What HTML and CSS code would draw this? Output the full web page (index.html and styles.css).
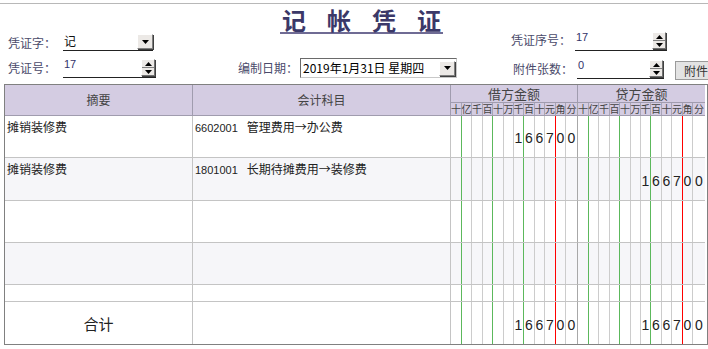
FILE: index.html
```html
<!DOCTYPE html>
<html lang="zh-CN">
<head>
    <meta charset="UTF-8">
    <meta name="viewport" content="width=device-width, initial-scale=1.0">
    <title>记帐凭证</title>
    <link rel="stylesheet" href="styles.css">
</head>
<body>
    <div class="wrap">
        <!-- 凭证头 -->
        <div class="top">
            <div class="titleRow">
                <h1 class="title"><span>记</span><span>帐</span><span>凭</span><span>证</span></h1>
            </div>

            <div class="formRow rowA">
                <label class="lbl">凭证字：</label>
                <div class="field selectField">
                    <span class="val">记</span>
                    <span class="dropBtn"><svg width="7" height="4"><path d="M0 0h7L3.5 4z"/></svg></span>
                </div>

                <div class="grp grpSeq">
                    <label class="lbl lblWide">凭证序号：</label>
                    <div class="field spinField seqField">
                        <span class="val num">17</span>
                        <span class="spinBtn">
                            <i><svg width="7" height="4"><path d="M3.5 0L7 4H0z"/></svg></i>
                            <i><svg width="7" height="4"><path d="M0 0h7L3.5 4z"/></svg></i>
                        </span>
                    </div>
                </div>
            </div>

            <div class="formRow rowB">
                <label class="lbl">凭证号：</label>
                <div class="field spinField noField">
                    <span class="val num">17</span>
                    <span class="spinBtn">
                        <i><svg width="7" height="4"><path d="M3.5 0L7 4H0z"/></svg></i>
                        <i><svg width="7" height="4"><path d="M0 0h7L3.5 4z"/></svg></i>
                    </span>
                </div>

                <div class="grp grpDate">
                    <label class="lbl lblDate">编制日期：</label>
                    <div class="dateBox">
                        <span class="dateVal">2019年1月31日 星期四</span>
                        <span class="dropBtn"><svg width="7" height="4"><path d="M0 0h7L3.5 4z"/></svg></span>
                    </div>
                </div>

                <div class="grp grpAttach">
                    <label class="lbl lblWide">附件张数：</label>
                    <div class="field spinField attachField">
                        <span class="val num">0</span>
                        <span class="spinBtn">
                            <i><svg width="7" height="4"><path d="M3.5 0L7 4H0z"/></svg></i>
                            <i><svg width="7" height="4"><path d="M0 0h7L3.5 4z"/></svg></i>
                        </span>
                    </div>
                    <button class="attachBtn">附件</button>
                </div>
            </div>
        </div>

        <!-- 分录表 -->
        <div class="voucher">
            <div class="cell hd span2">摘要</div>
            <div class="cell hd span2">会计科目</div>
            <div class="cell hd amt">借方金额</div>
            <div class="cell hd amt lastCol">贷方金额</div>
            <div class="cell hd money unit"><span>十</span><span>亿</span><span>千</span><span>百</span><span>十</span><span>万</span><span>千</span><span>百</span><span>十</span><span>元</span><span>角</span><span>分</span></div>
            <div class="cell hd money unit lastCol"><span>十</span><span>亿</span><span>千</span><span>百</span><span>十</span><span>万</span><span>千</span><span>百</span><span>十</span><span>元</span><span>角</span><span>分</span></div>

            <!-- 第1行 -->
            <div class="cell txt">摊销装修费</div>
            <div class="cell txt"><span class="code">6602001</span>管理费用→办公费</div>
            <div class="cell money"><span></span><span></span><span></span><span></span><span></span><span></span><span>1</span><span>6</span><span>6</span><span>7</span><span>0</span><span>0</span></div>
            <div class="cell money lastCol"><span></span><span></span><span></span><span></span><span></span><span></span><span></span><span></span><span></span><span></span><span></span><span></span></div>

            <!-- 第2行 -->
            <div class="cell txt shade">摊销装修费</div>
            <div class="cell txt shade"><span class="code">1801001</span>长期待摊费用→装修费</div>
            <div class="cell money shade"><span></span><span></span><span></span><span></span><span></span><span></span><span></span><span></span><span></span><span></span><span></span><span></span></div>
            <div class="cell money shade lastCol"><span></span><span></span><span></span><span></span><span></span><span></span><span>1</span><span>6</span><span>6</span><span>7</span><span>0</span><span>0</span></div>

            <!-- 第3行 -->
            <div class="cell txt"></div>
            <div class="cell txt"></div>
            <div class="cell money"><span></span><span></span><span></span><span></span><span></span><span></span><span></span><span></span><span></span><span></span><span></span><span></span></div>
            <div class="cell money lastCol"><span></span><span></span><span></span><span></span><span></span><span></span><span></span><span></span><span></span><span></span><span></span><span></span></div>

            <!-- 第4行 -->
            <div class="cell txt shade"></div>
            <div class="cell txt shade"></div>
            <div class="cell money shade"><span></span><span></span><span></span><span></span><span></span><span></span><span></span><span></span><span></span><span></span><span></span><span></span></div>
            <div class="cell money shade lastCol"><span></span><span></span><span></span><span></span><span></span><span></span><span></span><span></span><span></span><span></span><span></span><span></span></div>

            <!-- 第5行 -->
            <div class="cell txt"></div>
            <div class="cell txt"></div>
            <div class="cell money"><span></span><span></span><span></span><span></span><span></span><span></span><span></span><span></span><span></span><span></span><span></span><span></span></div>
            <div class="cell money lastCol"><span></span><span></span><span></span><span></span><span></span><span></span><span></span><span></span><span></span><span></span><span></span><span></span></div>

            <!-- 合计 -->
            <div class="cell total lastRow">合计</div>
            <div class="cell txt lastRow"></div>
            <div class="cell money lastRow"><span></span><span></span><span></span><span></span><span></span><span></span><span>1</span><span>6</span><span>6</span><span>7</span><span>0</span><span>0</span></div>
            <div class="cell money lastRow lastCol"><span></span><span></span><span></span><span></span><span></span><span></span><span>1</span><span>6</span><span>6</span><span>7</span><span>0</span><span>0</span></div>
        </div>
    </div>
</body>
</html>
```

FILE: styles.css
```css
body {
    margin: 0;
    background: #fff;
    font-family: "Noto Sans CJK SC", "Liberation Sans", sans-serif;
    font-size: 12px;
    color: #333;
}

.wrap {
    width: 708px;
    height: 349px;
    overflow: hidden;
    padding-top: 3px;
    box-sizing: border-box;
}

.top {
    border-top: 1px solid #b8b8b8;
}

/* 标题 */
.titleRow {
    height: 30px;
    padding: 4px 0 0 15px;
    box-sizing: border-box;
    text-align: center;
}

.title {
    display: inline-flex;
    gap: 21px;
    margin: 0;
    padding: 0 2px;
    font-size: 24px;
    line-height: 24px;
    font-weight: bold;
    color: #3b3868;
    border-bottom: 2px solid #6f6b94;
}

/* 表单行 */
.formRow {
    display: flex;
    padding-left: 8px;
}

.formRow > *,
.grp > * {
    flex-shrink: 0;
}

.rowA {
    height: 18px;
}

.rowB {
    height: 20px;
    margin-top: 6px;
}

.grp {
    display: flex;
}

.lbl {
    width: 55px;
    color: #4a4a6a;
    line-height: 18px;
}

.rowB .lbl {
    line-height: 20px;
}

.lblWide {
    width: 64px;
}

.lblDate {
    width: 62px;
}

.field {
    display: flex;
    justify-content: space-between;
    box-sizing: border-box;
    border-bottom: 1px solid #222;
}

.val {
    padding-left: 1px;
    line-height: 14px;
    color: #111;
}

.num {
    font-family: "Liberation Sans", sans-serif;
    font-size: 11px;
    line-height: 12px;
    color: #33336a;
}

.selectField {
    width: 90px;
    height: 17px;
}

.dropBtn {
    display: flex;
    align-items: center;
    justify-content: center;
    width: 16px;
    height: 15px;
    box-sizing: border-box;
    background: #ece9e6;
    border: 1px solid;
    border-color: #fff #808080 #808080 #fff;
    box-shadow: 1px 1px 0 #404040;
}

.spinField {
    height: 20px;
}

.noField {
    width: 93px;
}

.grpSeq {
    margin-left: 358px;
    margin-top: -3px;
}

.seqField {
    width: 92px;
}

.spinBtn {
    display: flex;
    flex-direction: column;
    width: 14px;
    height: 17px;
    margin: 1px 1px 0 0;
    box-sizing: border-box;
    background: #ece9e6;
    border: 1px solid;
    border-color: #fff #707070 #707070 #fff;
    box-shadow: 1px 1px 0 #404040;
}

.spinBtn i {
    flex: 1;
    display: flex;
    align-items: center;
    justify-content: center;
}

.spinBtn i + i {
    border-top: 1px solid #808080;
}

.grpDate {
    margin-left: 82px;
}

.dateBox {
    display: flex;
    justify-content: space-between;
    align-items: center;
    width: 157px;
    height: 20px;
    box-sizing: border-box;
    border: 1px solid #9a9a9a;
    border-color: #6a6a6a #c8c8c8 #c8c8c8 #6a6a6a;
    padding: 0 1px 0 2px;
}

.dateVal {
    color: #000;
    line-height: 18px;
}

.grpAttach {
    margin-left: 56px;
    margin-top: 1px;
}

.attachField {
    width: 87px;
}

.attachBtn {
    width: 40px;
    height: 19px;
    margin: 2px 0 0 11px;
    padding: 0 0 0 8px;
    text-align: left;
    font-family: "Noto Sans CJK SC", sans-serif;
    font-size: 12px;
    line-height: 16px;
    color: #333;
    background: #e3e3e3;
    border: 1px solid #9a9a9a;
}

/* 分录表 */
.voucher {
    display: grid;
    grid-template-columns: 188px 258px 127px 127px;
    grid-template-rows: 18px 13px 42px 43px 42px 42px 17px 42px;
    width: 702px;
    margin: 6px 0 0 4px;
    border: 1px solid #808080;
}

.cell {
    box-sizing: border-box;
    border-right: 1px solid #c4c4c4;
    border-bottom: 1px solid #c4c4c4;
    background: #fff;
}

.lastCol {
    border-right: none;
}

.lastRow {
    border-bottom: none;
}

.shade {
    background: #f6f6f9;
}

.hd {
    display: flex;
    align-items: center;
    justify-content: center;
    background: #d4cce2;
    border-color: #a09cae;
    color: #444;
}

.span2 {
    grid-row: span 2;
    padding-bottom: 2px;
}

.amt {
    font-size: 13px;
}

.txt {
    padding: 2px 2px 0;
    line-height: 17px;
    color: #222;
}

.code {
    font-family: "Liberation Sans", sans-serif;
    font-size: 11px;
    margin-right: 9px;
}

.total {
    display: flex;
    align-items: center;
    justify-content: center;
    font-size: 15px;
    color: #222;
}

.money {
    display: grid;
    grid-template-columns: 11px 10px 11px 10px 11px 10px 10px 11px 10px 11px 10px 1fr;
    border-right-color: #a8a8a8;
}

.money span {
    display: flex;
    align-items: center;
    justify-content: center;
    min-width: 0;
    padding-top: 3px;
    box-sizing: border-box;
    border-right: 1px solid #cccccc;
    font-family: "Liberation Sans", sans-serif;
    font-size: 14px;
    color: #222;
}

.money span:nth-child(1),
.money span:nth-child(4),
.money span:nth-child(7) {
    border-right-color: #5cb85c;
}

.money span:nth-child(10) {
    border-right-color: #ff0000;
}

.money span:nth-child(12) {
    border-right: none;
}

.unit span,
.unit span:nth-child(1),
.unit span:nth-child(4),
.unit span:nth-child(7),
.unit span:nth-child(10) {
    padding-top: 0;
    border-right-color: #a8a4b6;
    font-family: "Noto Sans CJK SC", sans-serif;
    font-size: 10px;
    line-height: 12px;
    color: #444;
    white-space: nowrap;
}
```
